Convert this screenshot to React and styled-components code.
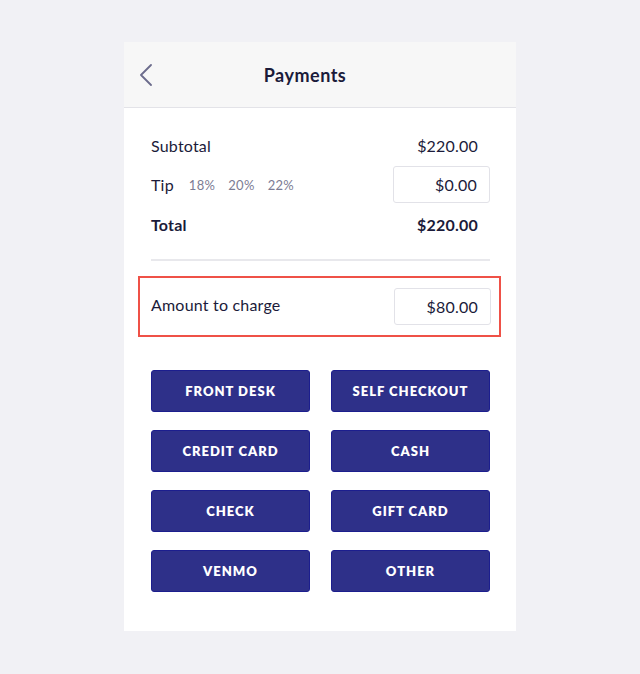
import React from 'react'
import styled, { createGlobalStyle } from 'styled-components'

const GlobalStyle = createGlobalStyle`
    body {
        margin: 0;
        background: #f1f1f5;
        font-family: Lato, "Noto Sans", sans-serif;
        color: #1b1b3a;
    }
`

const methods = ['Front Desk', 'Self Checkout', 'Credit Card', 'Cash', 'Check', 'Gift Card', 'Venmo', 'Other']

function App() {
    return (
        <Page>
            <GlobalStyle />
            <Card>
                <Header>
                    <BackButton aria-label="back">
                        <svg width="12" height="22" viewBox="0 0 12 22" fill="none">
                            <polyline points="11,1 1,11 11,21" stroke="#6c6c8c" strokeWidth="1.8" strokeLinejoin="round" strokeLinecap="round" />
                        </svg>
                    </BackButton>
                    <Title>Payments</Title>
                </Header>
                <Body>
                    <Row $mt={26}>
                        <Label>Subtotal</Label>
                        <Value>$220.00</Value>
                    </Row>
                    <Row $mt={10}>
                        <Label>
                            Tip
                            <Tips>
                                <span>18%</span>
                                <span>20%</span>
                                <span>22%</span>
                            </Tips>
                        </Label>
                        <AmountInput>$0.00</AmountInput>
                    </Row>
                    <Row $mt={10}>
                        <Label $bold>Total</Label>
                        <Value $bold>$220.00</Value>
                    </Row>
                    <Divider />
                    <ChargeBox>
                        <Label $lift>Amount to charge</Label>
                        <AmountInput>$80.00</AmountInput>
                    </ChargeBox>
                    <MethodGrid>
                        {methods.map(m => (
                            <MethodButton key={m}>{m}</MethodButton>
                        ))}
                    </MethodGrid>
                </Body>
            </Card>
        </Page>
    )
}

const Page = styled.div`
    min-height: 674px;
    padding-top: 42px;
    box-sizing: border-box;
`

const Card = styled.div`
    width: 392px;
    height: 589px;
    margin: 0 auto;
    background: #ffffff;
`

const Header = styled.div`
    height: 66px;
    display: flex;
    align-items: center;
    padding: 0 16px;
    background: #f7f7f7;
    border-bottom: 1px solid #e3e3e8;
    box-sizing: border-box;
`

const BackButton = styled.button`
    background: none;
    border: none;
    padding: 0;
    width: 24px;
    display: flex;
    align-items: center;
    cursor: pointer;
`

const Title = styled.h1`
    flex: 1;
    margin: 0 54px 0 0;
    text-align: center;
    font-size: 18px;
    font-weight: 700;
    letter-spacing: 0.5px;
    color: #1b1b3a;
`

const Body = styled.div`
    padding: 0 26px 0 27px;
`

const Row = styled.div`
    display: flex;
    align-items: center;
    justify-content: space-between;
    margin-top: ${p => p.$mt}px;
    min-height: 22px;
`

const Label = styled.div`
    display: flex;
    align-items: center;
    font-size: 16px;
    font-weight: ${p => (p.$bold ? 700 : 400)};
    letter-spacing: 0.2px;
    margin-bottom: ${p => (p.$lift ? 4 : 0)}px;
`

const Value = styled.div`
    font-size: 16px;
    font-weight: ${p => (p.$bold ? 700 : 400)};
    padding-right: 12px;
    letter-spacing: 0.2px;
`

const Tips = styled.div`
    display: flex;
    gap: 13px;
    margin-left: 15px;
    font-size: 13px;
    color: #7c7c94;
    letter-spacing: 0.3px;
`

const AmountInput = styled.div`
    width: 97px;
    height: 37px;
    box-sizing: border-box;
    border: 1px solid #e2e2e8;
    border-radius: 3px;
    display: flex;
    align-items: center;
    justify-content: flex-end;
    padding-right: 12px;
    font-size: 16px;
    letter-spacing: 0.2px;
`

const Divider = styled.div`
    height: 2px;
    background: #e8e8ec;
    margin-top: 24px;
`

const ChargeBox = styled.div`
    display: flex;
    align-items: center;
    justify-content: space-between;
    margin: 15px -11px 0 -13px;
    padding: 10px 8px 10px 11px;
    border: 2px solid #ef5147;
    height: 61px;
    box-sizing: border-box;
`

const MethodGrid = styled.div`
    display: grid;
    grid-template-columns: 1fr 1fr;
    column-gap: 21px;
    row-gap: 18px;
    margin-top: 33px;
`

const MethodButton = styled.button`
    height: 42px;
    background: #2e3089;
    border: 1px solid #1c1e8e;
    border-radius: 3px;
    color: #ffffff;
    font-family: Lato, "Noto Sans", sans-serif;
    font-size: 13px;
    font-weight: 800;
    letter-spacing: 1px;
    text-transform: uppercase;
    cursor: pointer;
`

export default App
